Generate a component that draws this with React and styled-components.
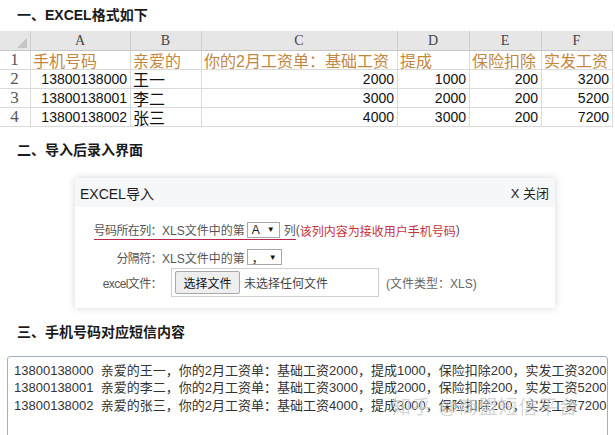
import React from "react";
import styled, { createGlobalStyle } from "styled-components";

const Global = createGlobalStyle`
  html, body { margin: 0; padding: 0; background: #fff; }
  body { font-family: "Liberation Sans", "Noto Sans CJK SC", sans-serif; color: #222; }
`;

const Page = styled.div`
  width: 615px;
  height: 435px;
  overflow: hidden;
  display: flex;
  flex-direction: column;
`;

const Heading = styled.h2`
  margin: 0;
  padding-left: 17px;
  height: ${(p) => p.$h}px;
  line-height: ${(p) => p.$lh || p.$h}px;
  font-size: 14px;
  font-weight: 700;
  color: #1a1a1a;
  font-family: "Liberation Sans", "Noto Sans CJK SC", sans-serif;
  flex: none;
`;

const Sheet = styled.div`
  display: grid;
  grid-template-columns: 31px 100px 71px 196px 72px 72px 71px;
  grid-template-rows: 20px repeat(4, 19px);
  width: 613px;
  flex: none;
`;

const Cell = styled.div`
  box-sizing: border-box;
  display: flex;
  align-items: center;
  justify-content: ${(p) => p.$align || "flex-start"};
  padding: 0 3px 0 2px;
  border-right: 1px solid ${(p) => (p.$head ? "#cfcfcf" : "#dadada")};
  border-bottom: 1px solid ${(p) => (p.$head ? "#c6c6c6" : "#dadada")};
  background: ${(p) => (p.$head ? "#e6e6e6" : "#fff")};
  white-space: nowrap;
  overflow: hidden;
  font-size: ${(p) => p.$size || 14}px;
  color: ${(p) => p.$color || "#111"};
  font-family: ${(p) =>
    p.$serif
      ? '"Liberation Serif", "Noto Sans CJK SC", serif'
      : '"Liberation Sans", "Noto Sans CJK SC", sans-serif'};
`;

const CornerMark = styled.svg`
  margin-left: auto;
  margin-top: auto;
  margin-bottom: 2px;
`;

const Dialog = styled.div`
  margin: 5px 0 0 75px;
  width: 480px;
  height: 130px;
  background: #fff;
  box-shadow: 0 0 8px rgba(0, 0, 0, 0.16);
  display: flex;
  flex-direction: column;
  flex: none;
`;

const DialogHead = styled.div`
  height: 29px;
  background: #f5f7f9;
  display: flex;
  align-items: center;
  justify-content: space-between;
  padding: 0 6px 0 5px;
  font-size: 14px;
  color: #1a1a1a;
`;

const Close = styled.span`
  font-size: 13px;
  color: #222;
`;

const DialogBody = styled.div`
  padding-top: 13px;
  display: flex;
  flex-direction: column;
  font-size: 12px;
  color: #555;
`;

const Row = styled.div`
  display: flex;
  align-items: center;
  height: ${(p) => p.$h}px;
  margin-top: ${(p) => p.$mt || 0}px;
`;

const Label = styled.div`
  width: 87px;
  flex: none;
  display: flex;
  justify-content: flex-end;
  white-space: nowrap;
  letter-spacing: -0.6px;
`;

const Under = styled.span`
  display: inline-flex;
  align-items: center;
  height: 20px;
  box-sizing: border-box;
  border-bottom: ${(p) => (p.$line ? "1px solid #b8284b" : "none")};
  white-space: nowrap;
`;

const Select = styled.span`
  box-sizing: border-box;
  display: inline-flex;
  align-items: center;
  justify-content: space-between;
  width: ${(p) => p.$w}px;
  height: 16px;
  margin: 0 4px 0 2px;
  padding: 0 4px 0 4px;
  border: 1px solid #a8a8a8;
  background: #fff;
  color: #222;
  font-size: 12px;
`;

const Arrow = styled.span`
  font-size: 8px;
  color: #111;
`;

const Red = styled.span`
  color: #c8303b;
`;

const FileBox = styled.div`
  box-sizing: border-box;
  margin-left: 9px;
  width: 208px;
  height: 29px;
  border: 1px solid #cfcfcf;
  display: flex;
  align-items: center;
  padding-left: 3px;
  color: #444;
`;

const FileButton = styled.span`
  box-sizing: border-box;
  height: 23px;
  width: 65px;
  display: inline-flex;
  align-items: center;
  justify-content: center;
  background: #eeeeee;
  border: 1px solid #a9a9a9;
  border-radius: 2px;
  color: #111;
  margin-right: 4px;
`;

const Hint = styled.span`
  margin-left: 7px;
  color: #666;
`;

const TextBox = styled.div`
  position: relative;
  margin: 0 7px;
  height: 90px;
  box-sizing: border-box;
  border: 1px solid #9fb1c4;
  border-radius: 3px;
  padding: 5px 0 0 6px;
  font-size: 13px;
  line-height: 17.3px;
  color: #333;
  white-space: pre;
  flex: none;
`;

const Watermark = styled.span`
  position: absolute;
  left: 384px;
  top: 42px;
  font-size: 19px;
  letter-spacing: 1px;
  color: rgba(150, 150, 150, 0.4);
  white-space: nowrap;
  text-shadow: 0 0 1px rgba(255, 255, 255, 0.8);
`;

const cols = ["A", "B", "C", "D", "E", "F"];
const titles = ["手机号码", "亲爱的", "你的2月工资单：基础工资", "提成", "保险扣除", "实发工资"];
const rows = [
  ["13800138000", "王一", "2000", "1000", "200", "3200"],
  ["13800138001", "李二", "3000", "2000", "200", "5200"],
  ["13800138002", "张三", "4000", "3000", "200", "7200"],
];

const messages = [
  "13800138000  亲爱的王一，你的2月工资单：基础工资2000，提成1000，保险扣除200，实发工资3200",
  "13800138001  亲爱的李二，你的2月工资单：基础工资3000，提成2000，保险扣除200，实发工资5200",
  "13800138002  亲爱的张三，你的2月工资单：基础工资4000，提成3000，保险扣除200，实发工资7200",
];

export default function App() {
  return (
    <Page>
      <Global />
      <Heading $h={31} $lh={30}>一、EXCEL格式如下</Heading>
      <Sheet>
        <Cell $head>
          <CornerMark width="10" height="10" viewBox="0 0 10 10">
            <polygon points="10,0 10,10 0,10" fill="#c4c4c4" />
          </CornerMark>
        </Cell>
        {cols.map((c) => (
          <Cell key={c} $head $align="center" $serif $size={14} $color="#444">
            {c}
          </Cell>
        ))}
        <Cell $align="center" $serif $size={17} $color="#555">1</Cell>
        {titles.map((t) => (
          <Cell key={t} $size={16} $color="#c4873e">{t}</Cell>
        ))}
        {rows.map((r, i) => (
          <React.Fragment key={i}>
            <Cell $align="center" $serif $size={17} $color="#555">{i + 2}</Cell>
            {r.map((v, j) => (
              <Cell key={j} $align={j === 1 ? "flex-start" : "flex-end"} $size={j === 1 ? 16 : 14}>
                {v}
              </Cell>
            ))}
          </React.Fragment>
        ))}
      </Sheet>
      <Heading $h={46}>二、导入后录入界面</Heading>
      <Dialog>
        <DialogHead>
          <span>EXCEL导入</span>
          <Close>X 关闭</Close>
        </DialogHead>
        <DialogBody>
          <Row $h={20}>
            <Label>
              <Under $line>号码所在列：</Under>
            </Label>
            <Under $line>
              XLS文件中的第
              <Select $w={33}>
                A<Arrow>▼</Arrow>
              </Select>
              列
            </Under>
            <span>(</span>
            <Red>该列内容为接收用户手机号码</Red>
            <span>)</span>
          </Row>
          <Row $h={20} $mt={7}>
            <Label>分隔符：</Label>
            XLS文件中的第
            <Select $w={35}>
              ，<Arrow>▼</Arrow>
            </Select>
          </Row>
          <Row $h={29} $mt={1}>
            <Label>excel文件：</Label>
            <FileBox>
              <FileButton>选择文件</FileButton>
              未选择任何文件
            </FileBox>
            <Hint>(文件类型：XLS)</Hint>
          </Row>
        </DialogBody>
      </Dialog>
      <Heading $h={48}>三、手机号码对应短信内容</Heading>
      <TextBox>
        {messages.join("\n")}
        <Watermark>知乎 @商盟短信平台</Watermark>
      </TextBox>
    </Page>
  );
}
